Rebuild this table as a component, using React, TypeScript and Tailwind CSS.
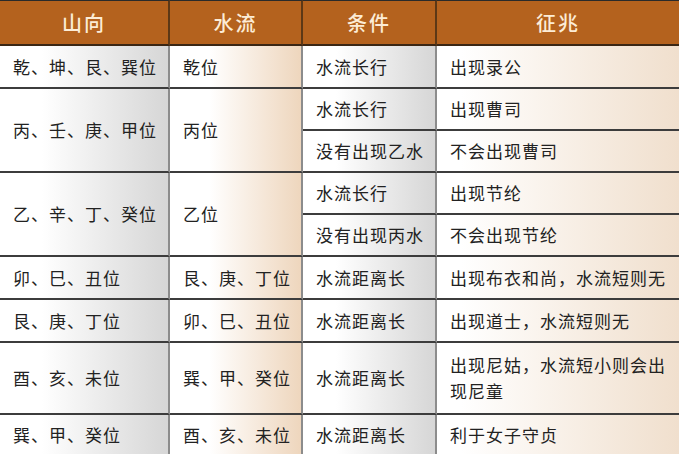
const font = { fontFamily: '"Noto Sans CJK SC", "Noto Sans", sans-serif' };

const c1 = "bg-linear-to-r from-white from-25% to-[#d6d6d6]";
const c2 = "bg-linear-to-r from-white from-30% to-[#eed6bd]";
const c4 = "bg-linear-to-r from-white from-10% to-[#f0dfcd]";

const td = "border-b-2 border-b-[#3c3c3c] border-r-2 border-r-[#8c8c8c] pl-[13px] pr-[8px] align-middle";

type Row = {
  h: number;
  a: string;
  b: string;
  sub: { h: number; c: string; d: string }[];
};

const rows: Row[] = [
  { h: 43, a: "乾、坤、艮、巽位", b: "乾位", sub: [{ h: 43, c: "水流长行", d: "出现录公" }] },
  {
    h: 84,
    a: "丙、壬、庚、甲位",
    b: "丙位",
    sub: [
      { h: 42, c: "水流长行", d: "出现曹司" },
      { h: 42, c: "没有出现乙水", d: "不会出现曹司" },
    ],
  },
  {
    h: 84,
    a: "乙、辛、丁、癸位",
    b: "乙位",
    sub: [
      { h: 42, c: "水流长行", d: "出现节纶" },
      { h: 42, c: "没有出现丙水", d: "不会出现节纶" },
    ],
  },
  { h: 43, a: "卯、巳、丑位", b: "艮、庚、丁位", sub: [{ h: 43, c: "水流距离长", d: "出现布衣和尚，水流短则无" }] },
  { h: 43, a: "艮、庚、丁位", b: "卯、巳、丑位", sub: [{ h: 43, c: "水流距离长", d: "出现道士，水流短则无" }] },
  { h: 72, a: "酉、亥、未位", b: "巽、甲、癸位", sub: [{ h: 72, c: "水流距离长", d: "出现尼姑，水流短小则会出现尼童" }] },
  { h: 41, a: "巽、甲、癸位", b: "酉、亥、未位", sub: [{ h: 41, c: "水流距离长", d: "利于女子守贞" }] },
];

export default function App() {
  return (
    <div className="w-[679px] h-[454px] overflow-hidden bg-white" style={font}>
      <table className="w-[679px] table-fixed border-separate border-spacing-0 text-[17px] tracking-[1px] leading-[26px] text-[#222]">
        <colgroup>
          <col className="w-[170px]" />
          <col className="w-[133px]" />
          <col className="w-[134px]" />
          <col className="w-[242px]" />
        </colgroup>
        <thead>
          <tr className="h-[46px]">
            {["山向", "水流", "条件", "征兆"].map((t, i) => (
              <th
                key={t}
                className={`h-[46px] border-t border-t-[#2a2a2a] border-b-2 border-b-[#3a2614] bg-[#b4621e] text-center align-middle text-[20px] font-medium tracking-[2px] text-[#fcecd6] ${
                  i < 3 ? "border-r-2 border-r-[#5c3816]" : ""
                }`}
              >
                {t}
              </th>
            ))}
          </tr>
        </thead>
        <tbody>
          {rows.map((r) =>
            r.sub.map((s, j) => (
              <tr key={r.a + j} style={{ height: s.h }}>
                {j === 0 && (
                  <>
                    <td rowSpan={r.sub.length} className={`${td} ${c1}`}>
                      {r.a}
                    </td>
                    <td rowSpan={r.sub.length} className={`${td} ${c2}`}>
                      {r.b}
                    </td>
                  </>
                )}
                <td className={`${td} ${c1}`}>{s.c}</td>
                <td className={`border-b-2 border-b-[#3c3c3c] pl-[13px] pr-[10px] align-middle ${c4}`}>{s.d}</td>
              </tr>
            ))
          )}
        </tbody>
      </table>
    </div>
  );
}
